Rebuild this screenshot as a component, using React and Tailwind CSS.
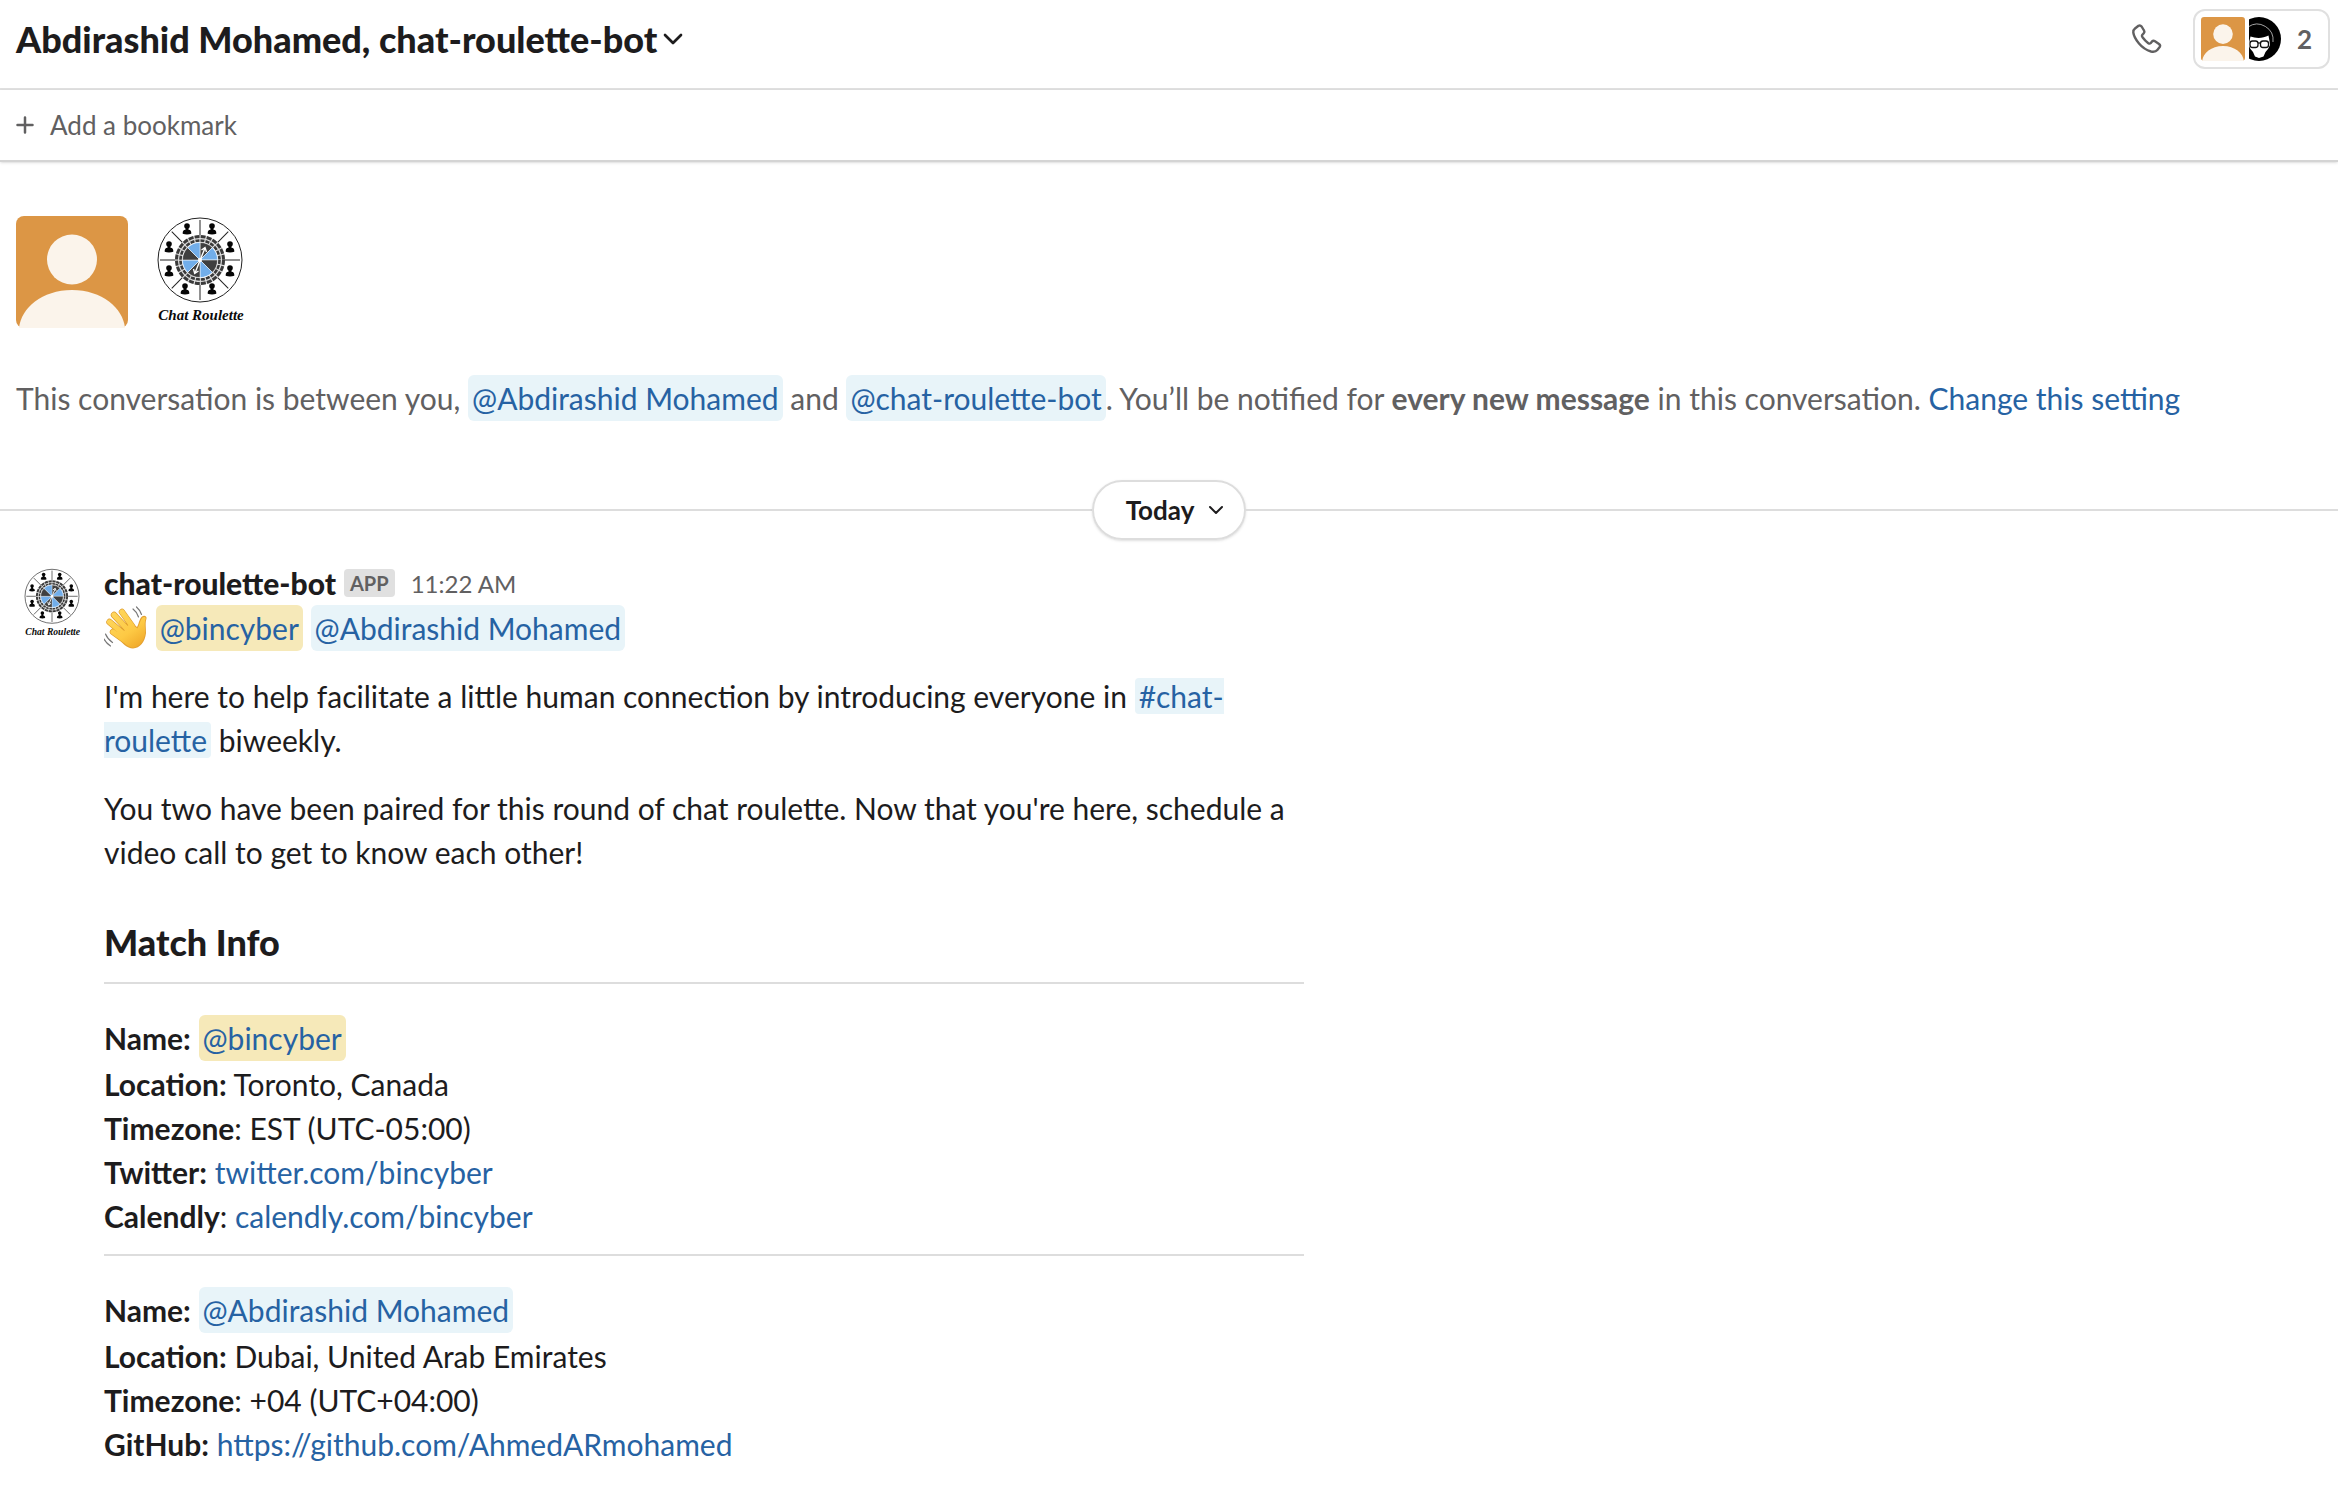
import React from 'react';
import { ChevronDown } from 'lucide-react';

function PersonAvatar({ className }) {
  return (
    <svg viewBox="0 0 112 112" className={className} role="img" aria-label="Abdirashid Mohamed">
      <rect width="112" height="112" rx="8" fill="#dc9645" />
      <circle cx="56" cy="43.500" r="25" fill="#fbf4eb" />
      <path d="M3 112C5 92 26 74 56 74s51 18 53 38z" fill="#fbf4eb" />
    </svg>
  );
}

const seats = [
  [43, 13], [68, 13], [86, 31], [86, 55], [68, 73], [41, 73], [25, 55], [25, 31],
];

const spokes = [0, 45, 90, 135, 180, 225, 270, 315];

function RouletteLogo({ className }) {
  return (
    <svg viewBox="0 0 112 112" className={className} role="img" aria-label="Chat Roulette">
      <circle cx="56" cy="44" r="42" fill="#fff" stroke="#222" strokeWidth="1" />
      {spokes.map((a) => (
        <path key={a} d="M56 4v15" transform={`rotate(${a} 56 44)`} stroke="#222" strokeWidth="1" />
      ))}
      {seats.map(([x, y]) => (
        <g key={`${x}-${y}`} transform={`translate(${x} ${y})`} fill="#050505">
          <circle cx="0" cy="-3" r="2.800" />
          <path d="M-1.500-2h3v2.800C3.500 1 4.500 2 4.300 4.800Q0 6-4.300 4.800C-4.500 2-3.500 1-1.500.8z" />
        </g>
      ))}
      <circle cx="56" cy="44" r="25" fill="#ddd" />
      <circle cx="56" cy="44" r="23.500" fill="none" stroke="#3a3a3a" strokeWidth="3" strokeDasharray="5 1.150" />
      <circle cx="56" cy="44" r="19.500" fill="none" stroke="#3a3a3a" strokeWidth="2.600" strokeDasharray="4 1.100" />
      <circle cx="56" cy="44" r="17.800" fill="#fff" />
      {spokes.map((a, i) => (
        <path
          key={a}
          d="M56 44V26.500A17.500 17.500 0 0 1 68.400 31.600z"
          transform={`rotate(${a} 56 44)`}
          fill={i % 2 ? '#72aeea' : '#3f3f3f'}
          stroke="#fff"
          strokeWidth=".5"
        />
      ))}
      <path d="M51 57l10-25M57.500 34l3.500-2.500 1.500 4.500M49.500 53l1.200 4.500 3.800-2.500" fill="none" stroke="#fff" strokeWidth="1.400" />
      <circle cx="56" cy="44" r="2" fill="#fff" />
      <text
        x="57"
        y="104"
        textAnchor="middle"
        fill="#0a0a0a"
        className="font-['Liberation_Serif',serif] text-[15px] font-bold italic"
      >
        Chat Roulette
      </text>
    </svg>
  );
}

function MaskAvatar({ className }) {
  return (
    <svg viewBox="0 0 44 44" className={className} role="img" aria-label="bincyber">
      <rect width="44" height="44" rx="5" fill="#fff" />
      <circle cx="22" cy="22" r="22" fill="#000" />
      <path d="M11 10A16 16 0 0 1 36 25" fill="none" stroke="#ccc" strokeWidth=".8" />
      <path d="M12.500 24 13.500 19.500C19 21.500 26 21.500 31.500 18.500L32.500 24 33 28 31 32 28.500 35 26.500 39.500 22 41 18 39.500 16 35 13.500 32 11.500 28z" fill="#fff" />
      <g fill="#fff" stroke="#111" strokeWidth="1.300">
        <rect x="13" y="24" width="8" height="6.500" rx="2.500" />
        <rect x="23.500" y="24" width="8" height="6.500" rx="2.500" />
        <path d="M21 26h2.500" />
      </g>
    </svg>
  );
}

function PhoneIcon() {
  return (
    <svg viewBox="0 0 32 32" className="size-8" fill="none" stroke="#616061" strokeWidth="2.400" strokeLinejoin="round" aria-hidden="true">
      <path d="M4 5.500 7.500 2.800Q9.200 1.800 10.600 3.500L13 7.500Q14 9 12.700 10.300L11.200 12Q10.500 13 11.500 14.300Q14 17.800 17.300 20.200Q18.700 21 19.600 20.200L21 18.500Q22.300 17.300 24 18.300L28 21Q29.800 22.300 28.700 24L26.300 27Q24.500 29.300 20 28.500Q13 26.500 8 20.500Q3 14.500 2.300 9.500Q2 7 4 5.500Z" />
    </svg>
  );
}

const fingers = 'M18 6 28 20M10 9 24 24M5.500 16 21 29M9 26 20 34';

function WaveIcon() {
  return (
    <svg viewBox="0 0 44 44" className="inline-block size-11 align-top" role="img" aria-label="waving hand">
      <defs>
        <linearGradient id="hand" gradientUnits="userSpaceOnUse" x1="8" y1="6" x2="34" y2="42">
          <stop offset="0" stopColor="#ffd75e" />
          <stop offset=".6" stopColor="#fdc944" />
          <stop offset="1" stopColor="#f0a92a" />
        </linearGradient>
      </defs>
      <path d={fingers} stroke="#dc9a2c" strokeWidth="6.400" strokeLinecap="round" />
      <path d="M15 32 26 15 33 21C35 18 35 13 38 10.500 40 9 43 10 42.500 12.500 41 17 42 21 42 27 41 36 36 42 29 42.500 23 42 18 38 15 32z" fill="#e3a031" />
      <path d={fingers} stroke="url(#hand)" strokeWidth="5.200" strokeLinecap="round" />
      <path d="M16 31 26 17 33.500 22.500C36 18 36 14 38.500 11.500 40 10.500 42 11 41.700 12.800 40 17 41.300 21 41.200 27 40 35.500 35.500 41 29 41.700 23.500 41 19 37 16 31z" fill="url(#hand)" />
      <path d="M29 3q4 3 5.500 8M32.500 1q4 3.500 5 7.500M1.500 28q2 5 7 8.500M0 33q2 4 6.500 7" fill="none" stroke="#777" strokeWidth="1.200" strokeLinecap="round" />
    </svg>
  );
}

function Mention({ children, self }) {
  return (
    <a
      href="#profile"
      className={`rounded-md px-1 py-[5px] text-[#2662a3] ${self ? 'bg-[#f6e9b9]' : 'bg-[#e8f4f9]'}`}
    >
      {children}
    </a>
  );
}

function Link({ children }) {
  return <a href="#link" className="text-[#2662a3]">{children}</a>;
}

export default function App() {
  return (
    <div className="min-h-screen bg-white font-['Lato',sans-serif] text-[30px] leading-[44px] text-[#1d1c1d]">
      <header className="flex h-[90px] items-center justify-between border-b-2 border-[#e0e0e0] pr-2 pb-2.5 pl-4">
        <h1>
          <button className="flex items-center font-['Lato_Black','Lato',sans-serif] text-[36px] font-black">
            Abdirashid Mohamed, chat-roulette-bot
            <ChevronDown className="size-8" strokeWidth={2} />
          </button>
        </h1>
        <div className="flex items-center gap-[26px]">
          <button aria-label="Start a call" className="p-1"><PhoneIcon /></button>
          <button className="flex h-[60px] items-center rounded-xl border-2 border-[#e0e0e0] pr-4 pl-1.5">
            <PersonAvatar className="size-11" />
            <span className="ml-1 flex w-8 justify-end overflow-hidden"><MaskAvatar className="size-11 shrink-0" /></span>
            <span className="pl-4 text-[26px] font-bold text-[#616061]">2</span>
          </button>
        </div>
      </header>

      <div className="flex h-[72px] items-center border-b-2 border-[#d4d4d4] px-4 shadow-sm">
        <button className="flex items-center gap-4 text-[26px] text-[#616061]">
          <svg viewBox="0 0 18 18" className="size-[18px]" stroke="#616061" strokeWidth="2.500" strokeLinecap="round" aria-hidden="true">
            <path d="M9 1.500v15M1.500 9h15" />
          </svg>
          Add a bookmark
        </button>
      </div>

      <main>
        <section className="px-4 pt-[54px]">
          <div className="flex gap-4">
            <PersonAvatar className="size-28" />
            <RouletteLogo className="size-28" />
          </div>
          <p className="pt-12 text-[#616061]">
            This conversation is between you, <Mention>@Abdirashid Mohamed</Mention> and{' '}
            <Mention>@chat-roulette-bot</Mention>. You’ll be notified for <b>every new message</b> in this
            conversation. <Link>Change this setting</Link>
          </p>
        </section>

        <div className="mt-[60px] flex items-center">
          <hr className="grow border-t-2 border-[#dddddd]" />
          <button className="flex h-[60px] items-center gap-2.5 rounded-full border-2 border-[#dddddd] pr-4 pl-8 text-[26px] font-bold shadow-sm">
            Today
            <ChevronDown className="size-6" strokeWidth={2} />
          </button>
          <hr className="grow border-t-2 border-[#dddddd]" />
        </div>

        <article className="flex gap-4 px-4 pt-5">
          <RouletteLogo className="mt-2 size-[72px] shrink-0" />
          <div className="w-full max-w-[1200px]">
            <div className="flex items-center">
              <b className="font-['Lato_Black','Lato',sans-serif] font-black">chat-roulette-bot</b>
              <span className="ml-2 rounded-sm bg-[#e0e0e0] px-1.5 text-[20px] leading-7 font-bold text-[#616061]">APP</span>
              <time className="ml-4 pt-0.5 text-[24px] text-[#616061]">11:22 AM</time>
            </div>
            <p>
              <WaveIcon /> <Mention self>@bincyber</Mention> <Mention>@Abdirashid Mohamed</Mention>
            </p>
            <p className="mt-6">
              I'm here to help facilitate a little human connection by introducing everyone in{' '}
              <a href="#channel" className="rounded-sm bg-[#e8f4f9] box-decoration-slice px-1 text-[#2662a3]">#chat-roulette</a> biweekly.
            </p>
            <p className="mt-6">
              You two have been paired for this round of chat roulette. Now that you're here, schedule a video call to
              get to know each other!
            </p>
            <h2 className="mt-[46px] font-['Lato_Black','Lato',sans-serif] text-[36px] font-black">Match Info</h2>
            <hr className="mt-[18px] border-t-2 border-[#dddddd]" />
            <div className="mt-8">
              <p className="mb-0.5"><b>Name:</b> <Mention self>@bincyber</Mention></p>
              <p><b>Location:</b> Toronto, Canada</p>
              <p><b>Timezone</b>: EST (UTC-05:00)</p>
              <p><b>Twitter:</b> <Link>twitter.com/bincyber</Link></p>
              <p><b>Calendly</b>: <Link>calendly.com/bincyber</Link></p>
            </div>
            <hr className="mt-4 border-t-2 border-[#dddddd]" />
            <div className="mt-8">
              <p className="mb-0.5"><b>Name:</b> <Mention>@Abdirashid Mohamed</Mention></p>
              <p><b>Location:</b> Dubai, United Arab Emirates</p>
              <p><b>Timezone</b>: +04 (UTC+04:00)</p>
              <p><b>GitHub:</b> <Link>https://github.com/AhmedARmohamed</Link></p>
            </div>
          </div>
        </article>
      </main>
    </div>
  );
}
